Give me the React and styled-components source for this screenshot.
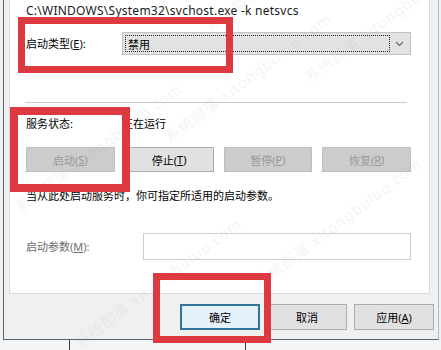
import React from "react";
import styled, { createGlobalStyle } from "styled-components";

const GlobalStyle = createGlobalStyle`
  html, body {
    margin: 0;
    padding: 0;
    background: #eef0f2;
  }
  body {
    font-family: "Noto Sans", "Noto Sans CJK SC", sans-serif;
    font-size: 11px;
    color: #000;
  }
`;

const Page = styled.div`
  position: relative;
  width: 441px;
  height: 350px;
  overflow: hidden;
  background: #eef0f2;
`;

const Dialog = styled.div`
  box-sizing: border-box;
  margin-left: 3px;
  width: 436px;
  height: 340px;
  display: flex;
  flex-direction: column;
  background: #f0f0f0;
  border-left: 1px solid #55626d;
  border-right: 1px solid #a7c0d1;
  border-bottom: 1px solid #55626d;
`;

const Panel = styled.div`
  box-sizing: border-box;
  margin-left: 5px;
  width: 421px;
  height: 294px;
  padding: 4px 18px 0 16px;
  background: #fff;
  border: 1px solid #d9d9d9;
  border-top: none;
  display: flex;
  flex-direction: column;
`;

const Line = styled.div`
  line-height: 14px;
  margin-top: ${({ $top }) => $top || 0}px;
  color: ${({ $muted }) => ($muted ? "#6d6d6d" : "#000")};
  white-space: nowrap;
`;

const PathLine = styled(Line)`
  font-size: 12px;
  letter-spacing: 0.25px;
  color: #1a1a1a;
`;

const Row = styled.div`
  display: flex;
  align-items: center;
  margin-top: ${({ $top }) => $top || 0}px;
`;

const Label = styled.div`
  width: ${({ $w }) => $w}px;
  flex: none;
  line-height: 14px;
  white-space: nowrap;
  color: ${({ $muted }) => ($muted ? "#6d6d6d" : "#000")};
`;

const Select = styled.div`
  box-sizing: border-box;
  flex: 1;
  height: 23px;
  display: flex;
  align-items: center;
  padding: 2px;
  background: #e3e3e3;
  border: 1px solid #c2c2c2;
`;

const Focus = styled.div`
  box-sizing: border-box;
  flex: 1;
  height: 100%;
  display: flex;
  align-items: center;
  padding-left: 2px;
  border: 1px dotted #222;
`;

const Chevron = styled.div`
  width: 18px;
  display: flex;
  justify-content: center;
`;

const Separator = styled.div`
  height: 1px;
  background: #c9c9c9;
  margin: 47px 4px 0 -1px;
`;

const ButtonGrid = styled.div`
  display: grid;
  grid-template-columns: repeat(4, 1fr);
  gap: 10px;
  margin-top: 16px;
`;

const Button = styled.div`
  box-sizing: border-box;
  height: ${({ $h }) => $h || 25}px;
  width: ${({ $w }) => ($w ? `${$w}px` : "auto")};
  display: flex;
  align-items: center;
  justify-content: center;
  white-space: nowrap;
  background: ${({ $disabled, $primary }) =>
    $disabled ? "#cccccc" : $primary ? "#e5f1fb" : "#e1e1e1"};
  border: ${({ $disabled, $primary }) =>
    $primary
      ? "2px solid #33749a"
      : $disabled
      ? "1px solid #bfbfbf"
      : "1px solid #adadad"};
  color: ${({ $disabled }) => ($disabled ? "#9a9a9a" : "#000")};
`;

const Input = styled.div`
  box-sizing: border-box;
  flex: 1;
  height: 27px;
  background: #fff;
  border: 1px solid #cfcfcf;
`;

const Footer = styled.div`
  display: flex;
  justify-content: flex-end;
  gap: 7px;
  padding: 10px 4px 0 0;
`;

const BottomStrip = styled.div`
  display: flex;
  height: 10px;
  background: #f3f4f5;
`;

const StripPart = styled.div`
  width: ${({ $w }) => $w}px;
  border-left: ${({ $edge }) => ($edge ? "1px solid #3e3e3e" : "none")};
`;

const Mark = styled.div`
  position: absolute;
  box-sizing: border-box;
  left: ${({ $x }) => $x}px;
  top: ${({ $y }) => $y}px;
  width: ${({ $w }) => $w}px;
  height: ${({ $h }) => $h}px;
  border: ${({ $t }) => $t || 7}px solid #dc3a40;
  pointer-events: none;
`;

const Watermark = styled.div`
  position: absolute;
  left: ${({ $x }) => $x}px;
  top: ${({ $y }) => $y}px;
  transform: rotate(-37deg);
  transform-origin: left top;
  font-size: 15px;
  letter-spacing: 1px;
  color: rgba(150, 150, 150, 0.12);
  white-space: nowrap;
  pointer-events: none;
`;

const buttons = [
  { text: "启动", key: "S", disabled: true },
  { text: "停止", key: "T" },
  { text: "暂停", key: "P", disabled: true },
  { text: "恢复", key: "R", disabled: true },
];

const marks = [
  { x: 18, y: 17, w: 215, h: 56, t: 7 },
  { x: 10, y: 107, w: 120, h: 85, t: 8 },
  { x: 153, y: 273, w: 118, h: 70, t: 7 },
];

const watermarks = [
  [10, 200],
  [160, 130],
  [300, 70],
  [70, 335],
  [250, 275],
  [200, 20],
];

export default function App() {
  return (
    <>
      <GlobalStyle />
      <Page>
        <Dialog>
          <Panel>
            <PathLine>C:\WINDOWS\System32\svchost.exe -k netsvcs</PathLine>
            <Row $top={14}>
              <Label $w={96}>
                启动类型(<u>E</u>):
              </Label>
              <Select>
                <Focus>禁用</Focus>
                <Chevron>
                  <svg width="9" height="6" viewBox="0 0 9 6">
                    <path d="M1 1l3.5 3.5L8 1" fill="none" stroke="#6a6a6a" strokeWidth="1.1" />
                  </svg>
                </Chevron>
              </Select>
            </Row>
            <Separator />
            <Row $top={14}>
              <Label $w={96}>服务状态:</Label>
              <Label $w={60}>正在运行</Label>
            </Row>
            <ButtonGrid>
              {buttons.map((b) => (
                <Button key={b.key} $disabled={b.disabled}>
                  {b.text}(<u>{b.key}</u>)
                </Button>
              ))}
            </ButtonGrid>
            <Line $top={17}>当从此处启动服务时，你可指定所适用的启动参数。</Line>
            <Row $top={30}>
              <Label $w={117} $muted>
                启动参数(<u>M</u>):
              </Label>
              <Input />
            </Row>
          </Panel>
          <Footer>
            <Button $primary $w={80} $h={26}>确定</Button>
            <Button $w={80} $h={26}>取消</Button>
            <Button $w={80} $h={26}>
              应用(<u>A</u>)
            </Button>
          </Footer>
        </Dialog>
        <BottomStrip>
          <StripPart $w={69} />
          <StripPart $w={176} $edge />
          <StripPart $w={196} $edge />
        </BottomStrip>
        {watermarks.map(([x, y], i) => (
          <Watermark key={i} $x={x} $y={y}>
            系统部落 xitongbuluo.com
          </Watermark>
        ))}
        {marks.map((m, i) => (
          <Mark key={i} $x={m.x} $y={m.y} $w={m.w} $h={m.h} $t={m.t} />
        ))}
      </Page>
    </>
  );
}
